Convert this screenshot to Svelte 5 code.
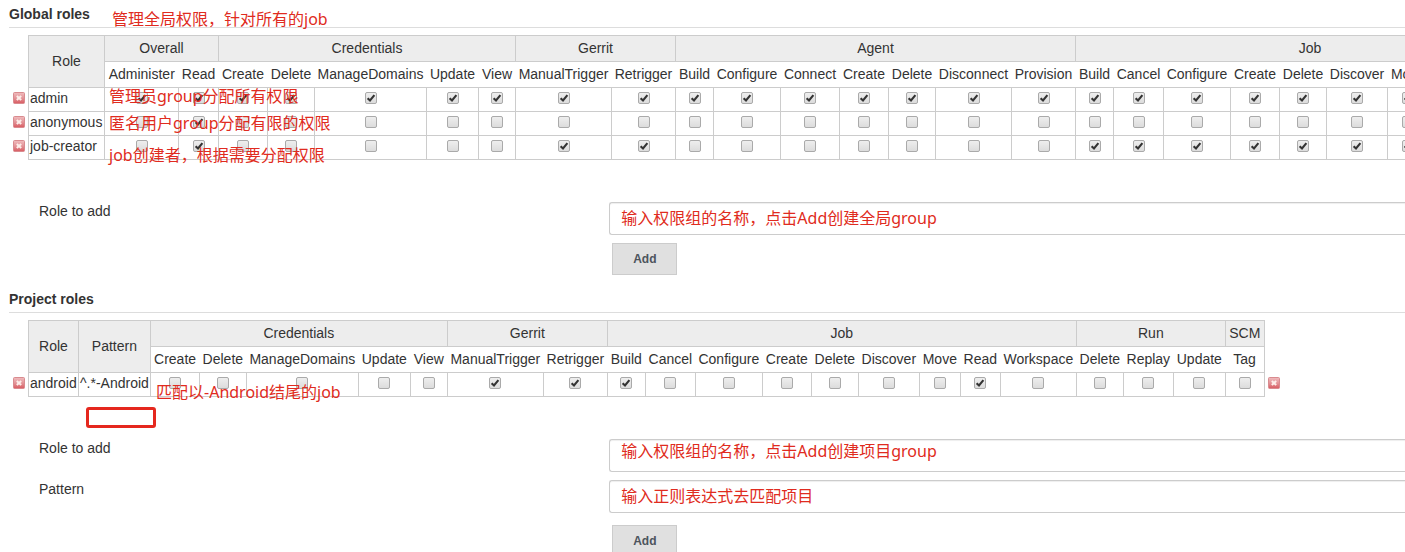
<script>
  const jobPermissions = ['Build', 'Cancel', 'Configure', 'Create', 'Delete', 'Discover', 'Move', 'Read', 'Workspace'];
  const credentials = { name: 'Credentials', items: ['Create', 'Delete', 'ManageDomains', 'Update', 'View'] };
  const gerrit = { name: 'Gerrit', items: ['ManualTrigger', 'Retrigger'] };

  // One width per permission keeps equal permissions equally wide in every table.
  const columnWidths = {
    Administer: 74,
    Build: 38,
    Cancel: 50,
    Configure: 67,
    Connect: 59,
    Create: 49,
    Delete: 47,
    Disconnect: 76,
    Discover: 61,
    ManageDomains: 112,
    ManualTrigger: 96,
    Move: 41,
    Provision: 64,
    Read: 40,
    Replay: 50,
    Retrigger: 64,
    Tag: 39,
    Update: 52,
    View: 37,
    Workspace: 76
  };

  const sections = [
    {
      id: 'global',
      title: 'Global roles',
      hasPattern: false,
      roleWidth: 76,
      groups: [
        { name: 'Overall', items: ['Administer', 'Read'] },
        credentials,
        gerrit,
        { name: 'Agent', items: ['Build', 'Configure', 'Connect', 'Create', 'Delete', 'Disconnect', 'Provision'] },
        { name: 'Job', items: jobPermissions }
      ],
      roles: [
        { name: 'admin', granted: (group, item) => true },
        { name: 'anonymous', granted: (group, item) => group === 'Overall' && item === 'Read' },
        {
          name: 'job-creator',
          granted: (group, item) => group === 'Gerrit' || group === 'Job' || (group === 'Overall' && item === 'Read')
        }
      ],
      fields: ['Role to add'],
      notes: [
        { text: '管理全局权限，针对所有的job', x: 112, y: 7 },
        { text: '管理员group分配所有权限', x: 109, y: 84 },
        { text: '匿名用户group分配有限的权限', x: 109, y: 111 },
        { text: 'job创建者，根据需要分配权限', x: 109, y: 143 }
      ],
      fieldNotes: [{ text: '输入权限组的名称，点击Add创建全局group', y: 4 }]
    },
    {
      id: 'project',
      title: 'Project roles',
      hasPattern: true,
      roleWidth: 50,
      groups: [
        credentials,
        gerrit,
        { name: 'Job', items: jobPermissions },
        { name: 'Run', items: ['Delete', 'Replay', 'Update'] },
        { name: 'SCM', items: ['Tag'] }
      ],
      roles: [
        {
          name: 'android',
          pattern: '^.*-Android',
          granted: (group, item) => group === 'Gerrit' || (group === 'Job' && (item === 'Build' || item === 'Read'))
        }
      ],
      fields: ['Role to add', 'Pattern'],
      notes: [{ text: '匹配以-Android结尾的job', x: 156, y: 95 }],
      fieldNotes: [
        { text: '输入权限组的名称，点击Add创建项目group', y: 0 },
        { text: '输入正则表达式去匹配项目', y: 4 }
      ]
    }
  ];
</script>

{#snippet removeButton(name)}
  <button type="button" class="remove" aria-label={`Delete ${name}`}>
    <svg viewBox="0 0 12 12" width="12" height="12" aria-hidden="true">
      <defs>
        <linearGradient id="remove-fill" x1="0" y1="0" x2="0" y2="1">
          <stop offset="0" stop-color="#f0bcbe" />
          <stop offset="0.5" stop-color="#e39498" />
          <stop offset="1" stop-color="#d85a60" />
        </linearGradient>
      </defs>
      <rect x="0.5" y="0.5" width="11" height="11" rx="1" fill="url(#remove-fill)" stroke="#d98b8f" />
      <path d="M3.8 4 8.2 8M8.2 4 3.8 8" stroke="#fdeeea" stroke-width="2" />
    </svg>
  </button>
{/snippet}

<main>
  {#each sections as section}
    <section>
      <h2>{section.title}</h2>
      <table>
        <colgroup>
          <col />
          <col style:width={`${section.roleWidth}px`} />
          {#if section.hasPattern}<col />{/if}
          {#each section.groups as group}
            {#each group.items as item}<col style:width={`${columnWidths[item]}px`} />{/each}
          {/each}
          <col />
        </colgroup>
        <thead>
          <tr class="groups">
            <td class="edge" rowspan="2"></td>
            <th rowspan="2">Role</th>
            {#if section.hasPattern}<th rowspan="2">Pattern</th>{/if}
            {#each section.groups as group}
              <th colspan={group.items.length}>{group.name}</th>
            {/each}
            <td class="edge" rowspan="2"></td>
          </tr>
          <tr class="permissions">
            {#each section.groups as group}
              {#each group.items as item}<th>{item}</th>{/each}
            {/each}
          </tr>
        </thead>
        <tbody>
          {#each section.roles as role}
            <tr>
              <td class="edge">{@render removeButton(role.name)}</td>
              <td>{role.name}</td>
              {#if section.hasPattern}<td>{role.pattern}</td>{/if}
              {#each section.groups as group}
                {#each group.items as item}
                  <td>
                    <input
                      type="checkbox"
                      checked={role.granted(group.name, item)}
                      aria-label={`${role.name}: ${group.name} ${item}`}
                    />
                  </td>
                {/each}
              {/each}
              <td class="edge">{@render removeButton(role.name)}</td>
            </tr>
          {/each}
        </tbody>
      </table>

      <form class={section.id}>
        {#each section.fields as field, i}
          <label for={`${section.id}-${i}`}>{field}</label>
          <div class="field">
            <input type="text" id={`${section.id}-${i}`} />
            <span class="note" style:top={`${section.fieldNotes[i].y}px`}>{section.fieldNotes[i].text}</span>
          </div>
        {/each}
        <button type="button" class="add">Add</button>
      </form>

      {#each section.notes as note}
        <span class="note" style:left={`${note.x}px`} style:top={`${note.y}px`}>{note.text}</span>
      {/each}
      {#if section.hasPattern}<span class="frame"></span>{/if}
    </section>
  {/each}
</main>

<style>
  :global(body) {
    margin: 0;
    background: #fff;
    overflow: hidden;
  }

  main {
    overflow: hidden;
    color: #333;
    font: 14px/20px "Liberation Sans", Arial, sans-serif;
  }

  section {
    position: relative;
    padding-bottom: 10px;
  }

  h2 {
    margin: 0 0 7px 9px;
    padding: 4px 0 3px;
    border-bottom: 1px solid #ddd;
    font-size: 14px;
    line-height: 20px;
  }

  table {
    width: max-content;
    margin-left: 12px;
    border-collapse: collapse;
    white-space: nowrap;
  }

  th {
    height: 23px;
    padding: 0 0 2px;
    font-weight: normal;
    text-align: center;
  }

  .groups th {
    border: 1px solid #ccc;
    background: #ededed;
  }

  .permissions th {
    border-bottom: 1px solid #ccc;
  }

  td {
    height: 20px;
    padding: 0 1px 3px;
    border: 1px solid #ccc;
  }

  .permissions th:last-child {
    border-right: 1px solid #ccc;
  }

  .edge {
    min-width: 12px;
    border: 0;
    padding: 0 3px 3px 1px;
  }

  .edge:last-child {
    padding-left: 3px;
  }

  .remove {
    display: block;
    width: 12px;
    height: 12px;
    padding: 0;
    border: 0;
    background: none;
  }

  .remove svg {
    display: block;
  }

  input[type='checkbox'] {
    appearance: none;
    display: block;
    box-sizing: border-box;
    width: 12px;
    height: 12px;
    margin: 0 auto;
    border: 1px solid #aaa;
    border-radius: 2px;
    background: linear-gradient(#eee, #dcdcdc);
  }

  input[type='checkbox']:checked {
    background:
      url("data:image/svg+xml,%3Csvg xmlns='http://www.w3.org/2000/svg' viewBox='0 0 10 10'%3E%3Cpath d='M1.6 5.2 4 7.5 8.4 2.2' fill='none' stroke='%23333' stroke-width='2.1'/%3E%3C/svg%3E") center / 10px 10px no-repeat,
      linear-gradient(#eee, #dcdcdc);
  }

  form {
    display: grid;
    grid-template-columns: 5fr 7fr;
    gap: 8px 2px;
    margin-left: 39px;
    padding-top: 42px;
  }

  label {
    line-height: 18px;
  }

  .field {
    position: relative;
  }

  .field input {
    display: block;
    box-sizing: border-box;
    width: 100%;
    height: 33px;
    padding: 6px;
    border: 1px solid #ccc;
    border-right: 0;
    border-radius: 3px 0 0 3px;
    box-shadow: inset 0 1px 1px #eee;
    font: inherit;
  }

  .add {
    grid-column: 2;
    justify-self: start;
    width: 65px;
    height: 32px;
    margin-left: 3px;
    border: 1px solid #ccc;
    background: #e0e0e0;
    color: #4d545d;
    font: bold 12px/20px "Liberation Sans", Arial, sans-serif;
  }

  .project .add {
    margin-top: 4px;
  }

  .note {
    position: absolute;
    color: #e02b20;
    font: 16px/24px "Noto Sans", "Noto Sans CJK SC", sans-serif;
    white-space: nowrap;
    pointer-events: none;
  }

  .field .note {
    left: 12px;
  }

  .frame {
    position: absolute;
    top: 122px;
    left: 86px;
    box-sizing: border-box;
    width: 70px;
    height: 21px;
    border: 3px solid #e5281e;
    border-radius: 3px;
  }
</style>
